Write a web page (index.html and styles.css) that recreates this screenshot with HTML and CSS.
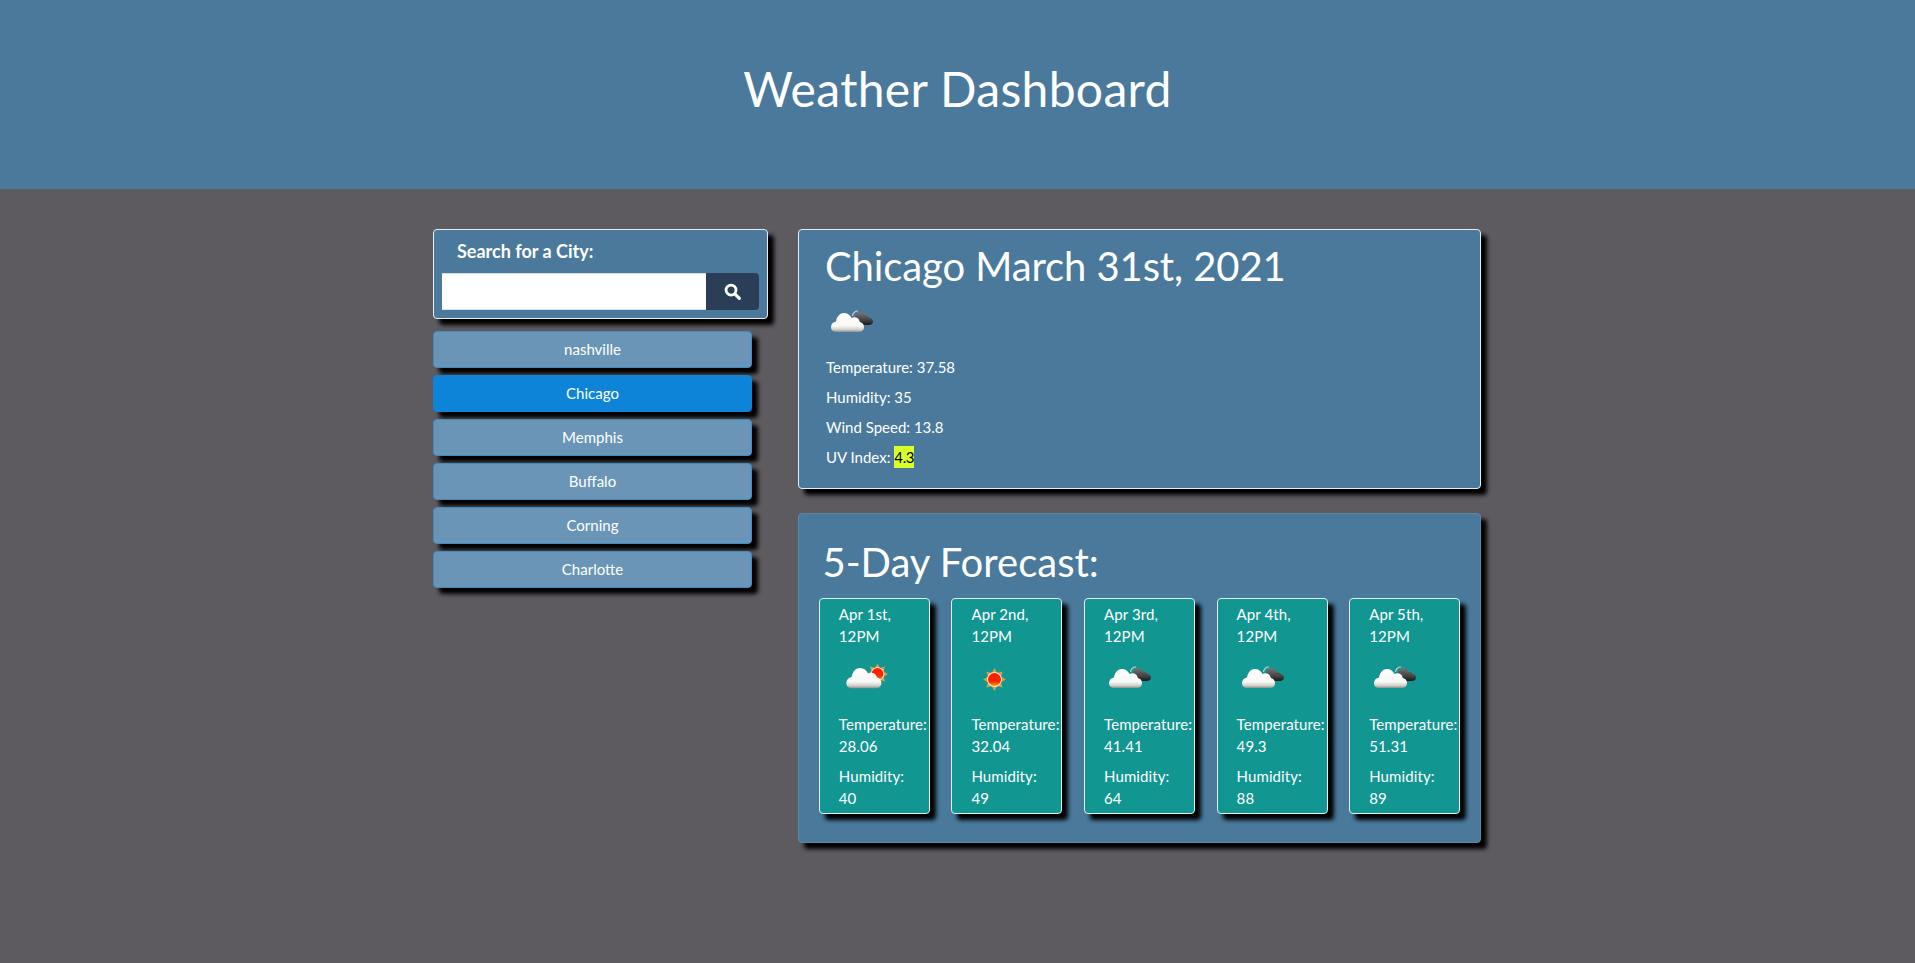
FILE: index.html
```html
<!DOCTYPE html>
<html lang="en">
<head>
<meta charset="utf-8">
<title>Weather Dashboard</title>
<link rel="stylesheet" href="styles.css">
</head>
<body>
<svg class="defs" width="0" height="0" aria-hidden="true">
  <defs>
    <linearGradient id="cw" x1="0" y1="0" x2="0" y2="1">
      <stop offset="0" stop-color="#ffffff"/><stop offset=".68" stop-color="#f8f8f6"/><stop offset=".88" stop-color="#cfcec8"/><stop offset="1" stop-color="#8b908e"/>
    </linearGradient>
    <linearGradient id="cd" x1="0" y1="0" x2="0" y2="1">
      <stop offset="0" stop-color="#777"/><stop offset=".65" stop-color="#404040"/><stop offset="1" stop-color="#181818"/>
    </linearGradient>
    <linearGradient id="sr" x1="0" y1="0" x2="0" y2="1">
      <stop offset="0" stop-color="#ff1c00"/><stop offset=".65" stop-color="#f82800"/><stop offset="1" stop-color="#ffa400"/>
    </linearGradient>
    <symbol id="i-rays" viewBox="-12 -12 24 24">
      <path d="M11.500 0L6.500 2.700 8.100 8.100 2.700 6.500 0 11.500-2.700 6.500-8.100 8.100-6.500 2.700-11.500 0-6.500-2.700-8.100-8.100-2.700-6.500 0-11.500 2.700-6.500 8.100-8.100 6.500-2.700z" fill="#d9a04a"/>
      <circle r="7.500" fill="#ffe8c4"/>
      <circle r="6.500" fill="url(#sr)"/>
    </symbol>
    <symbol id="i-cloud" viewBox="0 0 50 50">
      <path d="M11 37C7.500 37 6 34.500 6 32 6 29 8 27 11 26.500 12 21 15 18 19 18 22.500 18 25 20 26.500 23 28.500 22 31 22 33 23.500 34 24.500 34.500 26 35 27 37.500 27.500 39 29.500 39 32 39 35 37 37 34 37z" fill="url(#cw)"/>
    </symbol>
    <symbol id="i-dark" viewBox="0 0 50 50">
      <path d="M27.500 21C28 18 30 16 33 16" fill="none" stroke="#d0d0d0" stroke-width="1.200"/>
      <path d="M32 30C29.500 30 28 28.500 28 26.500 28 24.500 29 23 30 22.500 30 19 32 17 35 17 37.500 17 39.500 18.500 40 20.500 42 20.500 44 21.500 44.500 23 46.500 23.300 48 24.500 48 26.500 48 28.500 46 30 44 30z" fill="url(#cd)"/>
    </symbol>
  </defs>
</svg>

<header class="banner"><h1 class="banner-title">Weather Dashboard</h1></header>

<main class="layout">
  <aside class="sidebar">
    <form class="search-box">
      <label class="search-label" for="city">Search for a City:</label>
      <div class="search-row">
        <input class="search-input" id="city" type="text">
        <button class="search-btn" type="button" aria-label="Search">
          <svg class="search-icon" viewBox="0 0 16 16"><circle cx="6.600" cy="6.600" r="4.700" fill="none" stroke="#fff" stroke-width="2.600"/><path d="M10.400 10.400l4 4" stroke="#fff" stroke-width="3" stroke-linecap="round"/></svg>
        </button>
      </div>
    </form>
    <div class="city-list">
      <button class="city-btn" type="button">nashville</button>
      <button class="city-btn city-btn-active" type="button">Chicago</button>
      <button class="city-btn" type="button">Memphis</button>
      <button class="city-btn" type="button">Buffalo</button>
      <button class="city-btn" type="button">Corning</button>
      <button class="city-btn" type="button">Charlotte</button>
    </div>
  </aside>

  <section class="content">
    <div class="panel current">
      <h2 class="current-title">Chicago March 31st, 2021</h2>
      <svg class="current-icon" viewBox="0 0 50 50"><use href="#i-dark"/><use href="#i-cloud"/></svg>
      <p class="stat">Temperature: 37.58</p>
      <p class="stat">Humidity: 35</p>
      <p class="stat">Wind Speed: 13.8</p>
      <p class="stat">UV Index: <span class="uv">4.3</span></p>
    </div>

    <div class="panel forecast">
      <h2 class="forecast-title">5-Day Forecast:</h2>
      <div class="forecast-row">
        <article class="day">
          <p class="day-date">Apr 1st, 12PM</p>
          <svg class="day-icon" viewBox="0 0 50 50"><use href="#i-rays" x="28.500" y="12" width="22" height="22"/><use href="#i-cloud" x="2" y="-2" width="53" height="53"/></svg>
          <p class="day-stat">Temperature: 28.06</p>
          <p class="day-stat">Humidity: 40</p>
        </article>
        <article class="day">
          <p class="day-date">Apr 2nd, 12PM</p>
          <svg class="day-icon" viewBox="0 0 50 50"><use href="#i-rays" x="12.500" y="16.500" width="24" height="24"/></svg>
          <p class="day-stat">Temperature: 32.04</p>
          <p class="day-stat">Humidity: 49</p>
        </article>
        <article class="day">
          <p class="day-date">Apr 3rd, 12PM</p>
          <svg class="day-icon" viewBox="0 0 50 50"><use href="#i-dark"/><use href="#i-cloud"/></svg>
          <p class="day-stat">Temperature: 41.41</p>
          <p class="day-stat">Humidity: 64</p>
        </article>
        <article class="day">
          <p class="day-date">Apr 4th, 12PM</p>
          <svg class="day-icon" viewBox="0 0 50 50"><use href="#i-dark"/><use href="#i-cloud"/></svg>
          <p class="day-stat">Temperature: 49.3</p>
          <p class="day-stat">Humidity: 88</p>
        </article>
        <article class="day">
          <p class="day-date">Apr 5th, 12PM</p>
          <svg class="day-icon" viewBox="0 0 50 50"><use href="#i-dark"/><use href="#i-cloud"/></svg>
          <p class="day-stat">Temperature: 51.31</p>
          <p class="day-stat">Humidity: 89</p>
        </article>
      </div>
    </div>
  </section>
</main>
</body>
</html>
```

FILE: styles.css
```css
* { box-sizing: border-box; }

html, body { height: 100%; }

body {
  margin: 0;
  background: #5e5b60;
  color: #fff;
  font-family: Lato, "Open Sans", sans-serif;
  font-size: 15px;
  line-height: 1.5;
  overflow: hidden;
}

.defs { position: absolute; }

.banner {
  height: 189px;
  background: #4a799c;
  display: flex;
  align-items: center;
  justify-content: center;
  padding-bottom: 12px;
}

.banner-title {
  margin: 0;
  font-size: 48px;
  font-weight: 400;
  line-height: 1.2;
  letter-spacing: .34px;
}

.layout {
  width: 1049px;
  padding-right: 1px;
  margin: 40px auto 0;
  display: flex;
  align-items: flex-start;
  gap: 30px;
}

.sidebar { width: 335px; flex: none; }

.search-box {
  height: 90px;
  padding: 8px 8px 0;
  background: #4a799c;
  border: 1px solid #e4eef4;
  border-radius: 4px;
  box-shadow: 6px 6px 4px #000;
  display: block;
}

.search-label {
  display: block;
  height: 35px;
  padding-left: 15px;
  font-size: 18px;
  font-weight: 700;
  line-height: 27px;
}

.search-row { display: flex; height: 37px; }

.search-input {
  flex: 1;
  min-width: 0;
  background: #fff;
  border: 0;
  border-top: 1px solid #d5e0e8;
  border-bottom: 1px solid #d5e0e8;
  padding: 0;
}

.search-btn {
  width: 53px;
  flex: none;
  padding: 0;
  background: #2a3f57;
  border: 0;
  border-radius: 0 4px 4px 0;
  display: flex;
  align-items: center;
  justify-content: center;
}

.search-icon { width: 17px; height: 17px; display: block; }

.city-list {
  width: 319px;
  margin-top: 12px;
  display: flex;
  flex-direction: column;
  gap: 7px;
}

.city-btn {
  height: 37px;
  padding: 0 0 2px;
  background: #6b95b6;
  border: 1px solid #3f8bc4;
  border-radius: 4px;
  box-shadow: 6px 6px 4px #000;
  color: #fff;
  font-family: inherit;
  font-size: 15px;
  text-align: center;
}

.city-btn-active { background: #0e84d9; border-color: #0e84d9; }

.content {
  flex: 1;
  min-width: 0;
  display: flex;
  flex-direction: column;
  gap: 24px;
}

.panel {
  background: #4a799c;
  border-radius: 4px;
  box-shadow: 6px 6px 4px #000;
}

.current {
  height: 260px;
  padding: 12px 27px 0;
  border: 1px solid #e4eef4;
}

.current-title {
  margin: 0 0 0 -1px;
  font-size: 40px;
  font-weight: 400;
  line-height: 48px;
  letter-spacing: -.1px;
}

.current-icon { display: block; width: 50px; height: 50px; margin: 5px 0 10px -1px; }

.stat { margin: 0 0 6px; line-height: 24px; }

.uv { display: inline-block; line-height: 22px; letter-spacing: -.3px; background: #d9ff2b; color: #000; }

.forecast {
  height: 330px;
  padding: 24px 20px 0;
  border: 1px solid #5d87a6;
}

.forecast-title {
  margin: 0 0 12px 3.500px;
  font-size: 40px;
  font-weight: 400;
  line-height: 48px;
}

.forecast-row {
  margin: 0 -.2px;
  display: flex;
  justify-content: space-between;
}

.day {
  width: 111px;
  height: 216px;
  padding: 4px 0 0 19px;
  background: #119691;
  border: 1px solid #dff0ee;
  border-radius: 4px;
  box-shadow: 6px 6px 4px #000;
}

.day-date, .day-stat { margin: 0; line-height: 22px; letter-spacing: .1px; }

.day-stat { margin-bottom: 8px; max-width: 65px; }

.day-date { padding-right: 20px; }

.day-icon { display: block; width: 50px; height: 50px; margin: 4px 0 12px -1px; }
```
